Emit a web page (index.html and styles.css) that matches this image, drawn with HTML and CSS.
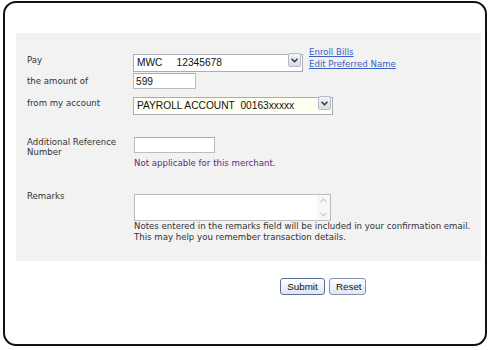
FILE: index.html
```html
<!DOCTYPE html>
<html lang="en">
<head>
  <meta charset="UTF-8" />
  <title>Pay Bills</title>
  <link rel="stylesheet" href="styles.css">
</head>
<body>
  <div class="frame">
    <form class="panel" action="#" method="POST">

      <div class="row row-pay">
        <div class="label">Pay</div>
        <div class="field">
          <div class="select-wrap select-pay">
            <select name="payee">
              <option>MWC&nbsp;&nbsp;&nbsp;&nbsp;&nbsp;12345678</option>
            </select>
            <span class="drop"><svg width="7" height="5" viewBox="0 0 7 5"><path d="M0.5 0.8 L3.5 3.8 L6.5 0.8" fill="none" stroke="#333" stroke-width="1.5"/></svg></span>
          </div>
          <div class="links">
            <a href="#">Enroll Bills</a>
            <a href="#">Edit Preferred Name</a>
          </div>
        </div>
      </div>

      <div class="row row-amount">
        <div class="label">the amount of</div>
        <div class="field">
          <input type="text" class="text amount" name="amount" value="599" />
        </div>
      </div>

      <div class="row row-account">
        <div class="label">from my account</div>
        <div class="field">
          <div class="select-wrap select-account">
            <select name="account">
              <option>PAYROLL ACCOUNT&nbsp;&nbsp;00163xxxxx</option>
            </select>
            <span class="drop"><svg width="7" height="5" viewBox="0 0 7 5"><path d="M0.5 0.8 L3.5 3.8 L6.5 0.8" fill="none" stroke="#333" stroke-width="1.5"/></svg></span>
          </div>
        </div>
      </div>

      <div class="row row-ref">
        <div class="label">Additional Reference Number</div>
        <div class="field stack">
          <input type="text" class="text ref" name="reference" />
          <div class="hint">Not applicable for this merchant.</div>
        </div>
      </div>

      <div class="row row-remarks">
        <div class="label">Remarks</div>
        <div class="field stack">
          <div class="area-wrap">
            <textarea name="remarks"></textarea>
            <span class="scroll">
              <svg width="7" height="5" viewBox="0 0 7 5"><path d="M0.5 4.2 L3.5 1.2 L6.5 4.2" fill="none" stroke="#c4c8d0" stroke-width="1.2"/></svg>
              <svg width="7" height="5" viewBox="0 0 7 5"><path d="M0.5 0.8 L3.5 3.8 L6.5 0.8" fill="none" stroke="#c4c8d0" stroke-width="1.2"/></svg>
            </span>
          </div>
          <div class="notes">Notes entered in the remarks field will be included in your confirmation email.<br>This may help you remember transaction details.</div>
        </div>
      </div>

    </form>

    <div class="actions">
      <button type="submit" class="btn btn-default">Submit</button>
      <button type="reset" class="btn">Reset</button>
    </div>
  </div>
</body>
</html>
```

FILE: styles.css
```css
body {
  margin: 0;
  background: #fff;
  font-family: "DejaVu Sans", Verdana, sans-serif;
}
.frame {
  box-sizing: border-box;
  height: 345px;
  margin: 1px 5px 4px 3px;
  border: 2px solid #111;
  border-radius: 13px;
  padding-top: 30px;
}
/* grey form block */
.panel {
  box-sizing: border-box;
  height: 228px;
  margin: 0 4px 0 11px;
  padding: 18px 0 0 11px;
  background: #f2f2f2;
}
.row {
  display: flex;
  align-items: flex-start;
}
.label {
  width: 106px;
  flex-shrink: 0;
  font-size: 8.6px;
  line-height: 11px;
  color: #333;
}
.field {
  display: flex;
  align-items: flex-start;
}
.field.stack {
  flex-direction: column;
}
.row-pay {
  height: 18px;
}
.row-pay .label,
.row-account .label {
  padding-top: 3.5px;
}
.row-amount {
  height: 16px;
  margin-top: 4px;
}
.row-amount .label {
  padding-top: 2.5px;
}
.row-account {
  height: 18px;
  margin-top: 5px;
}
.row-ref {
  margin-top: 25px;
}
.row-ref .label {
  line-height: 10px;
}
.row-remarks {
  margin-top: 21px;
}
.row-remarks .label {
  padding-top: 1px;
}
/* select boxes */
.select-wrap {
  position: relative;
  height: 18px;
}
.select-wrap select {
  box-sizing: border-box;
  height: 18px;
  width: 100%;
  margin: 0;
  padding: 0 0 0 3px;
  border: 1px solid #a7adb6;
  border-radius: 0;
  background: #fff;
  font-family: "Liberation Sans", Arial, sans-serif;
  font-size: 10.2px;
  color: #111;
  appearance: none;
  -webkit-appearance: none;
}
.select-pay {
  width: 170px;
}
.select-account {
  width: 200px;
}
.select-account select {
  background: #fffff0;
}
.drop {
  position: absolute;
  top: 2px;
  right: 2px;
  width: 11px;
  height: 12px;
  border: 1px solid #b4bac6;
  border-radius: 2px;
  background: linear-gradient(#f4f5f8, #d8dce6);
  display: flex;
  align-items: center;
  justify-content: center;
}
.links {
  display: flex;
  flex-direction: column;
  margin: -5px 0 0 6px;
  font-size: 8.6px;
  line-height: 12px;
}
.links a {
  color: #3a62c4;
}
/* text inputs */
.text {
  box-sizing: border-box;
  height: 16px;
  margin: 0;
  padding: 0 2px;
  border: 1px solid #b9bcc1;
  border-top-color: #a9acb2;
  background: #fff;
  font-family: "Liberation Sans", Arial, sans-serif;
  font-size: 10.2px;
  color: #111;
}
.amount {
  width: 63px;
}
.ref {
  width: 81px;
  margin-left: 1px;
}
.hint {
  margin: 4.5px 0 0 1px;
  font-size: 8.6px;
  line-height: 11px;
  color: #5b2a86;
}
.area-wrap {
  position: relative;
  width: 197px;
  height: 27px;
  margin: 4px 0 0 1px;
}
.area-wrap textarea {
  box-sizing: border-box;
  width: 100%;
  height: 100%;
  margin: 0;
  border: 1px solid #b9bcc1;
  resize: none;
  overflow: hidden;
}
.scroll {
  position: absolute;
  top: 1px;
  right: 1px;
  bottom: 1px;
  width: 13px;
  background: #f7f7f8;
  display: flex;
  flex-direction: column;
  align-items: center;
  justify-content: space-between;
  padding: 3px 0;
  box-sizing: border-box;
}
.notes {
  margin: 0.5px 0 0 1px;
  font-size: 8.6px;
  line-height: 11px;
  color: #333;
  white-space: nowrap;
}
/* buttons under the panel */
.actions {
  display: flex;
  gap: 4px;
  margin: 17px 0 0 275px;
}
.btn {
  height: 17px;
  padding: 0 6px;
  border: 1px solid #8392b4;
  border-radius: 3px;
  background: linear-gradient(#ffffff, #e3e5f0);
  font-family: "Liberation Sans", Arial, sans-serif;
  font-size: 9.8px;
  color: #111;
}
.btn-default {
  width: 45px;
  border-color: #5d6f9c;
}
.btn + .btn {
  width: 37px;
}
```
